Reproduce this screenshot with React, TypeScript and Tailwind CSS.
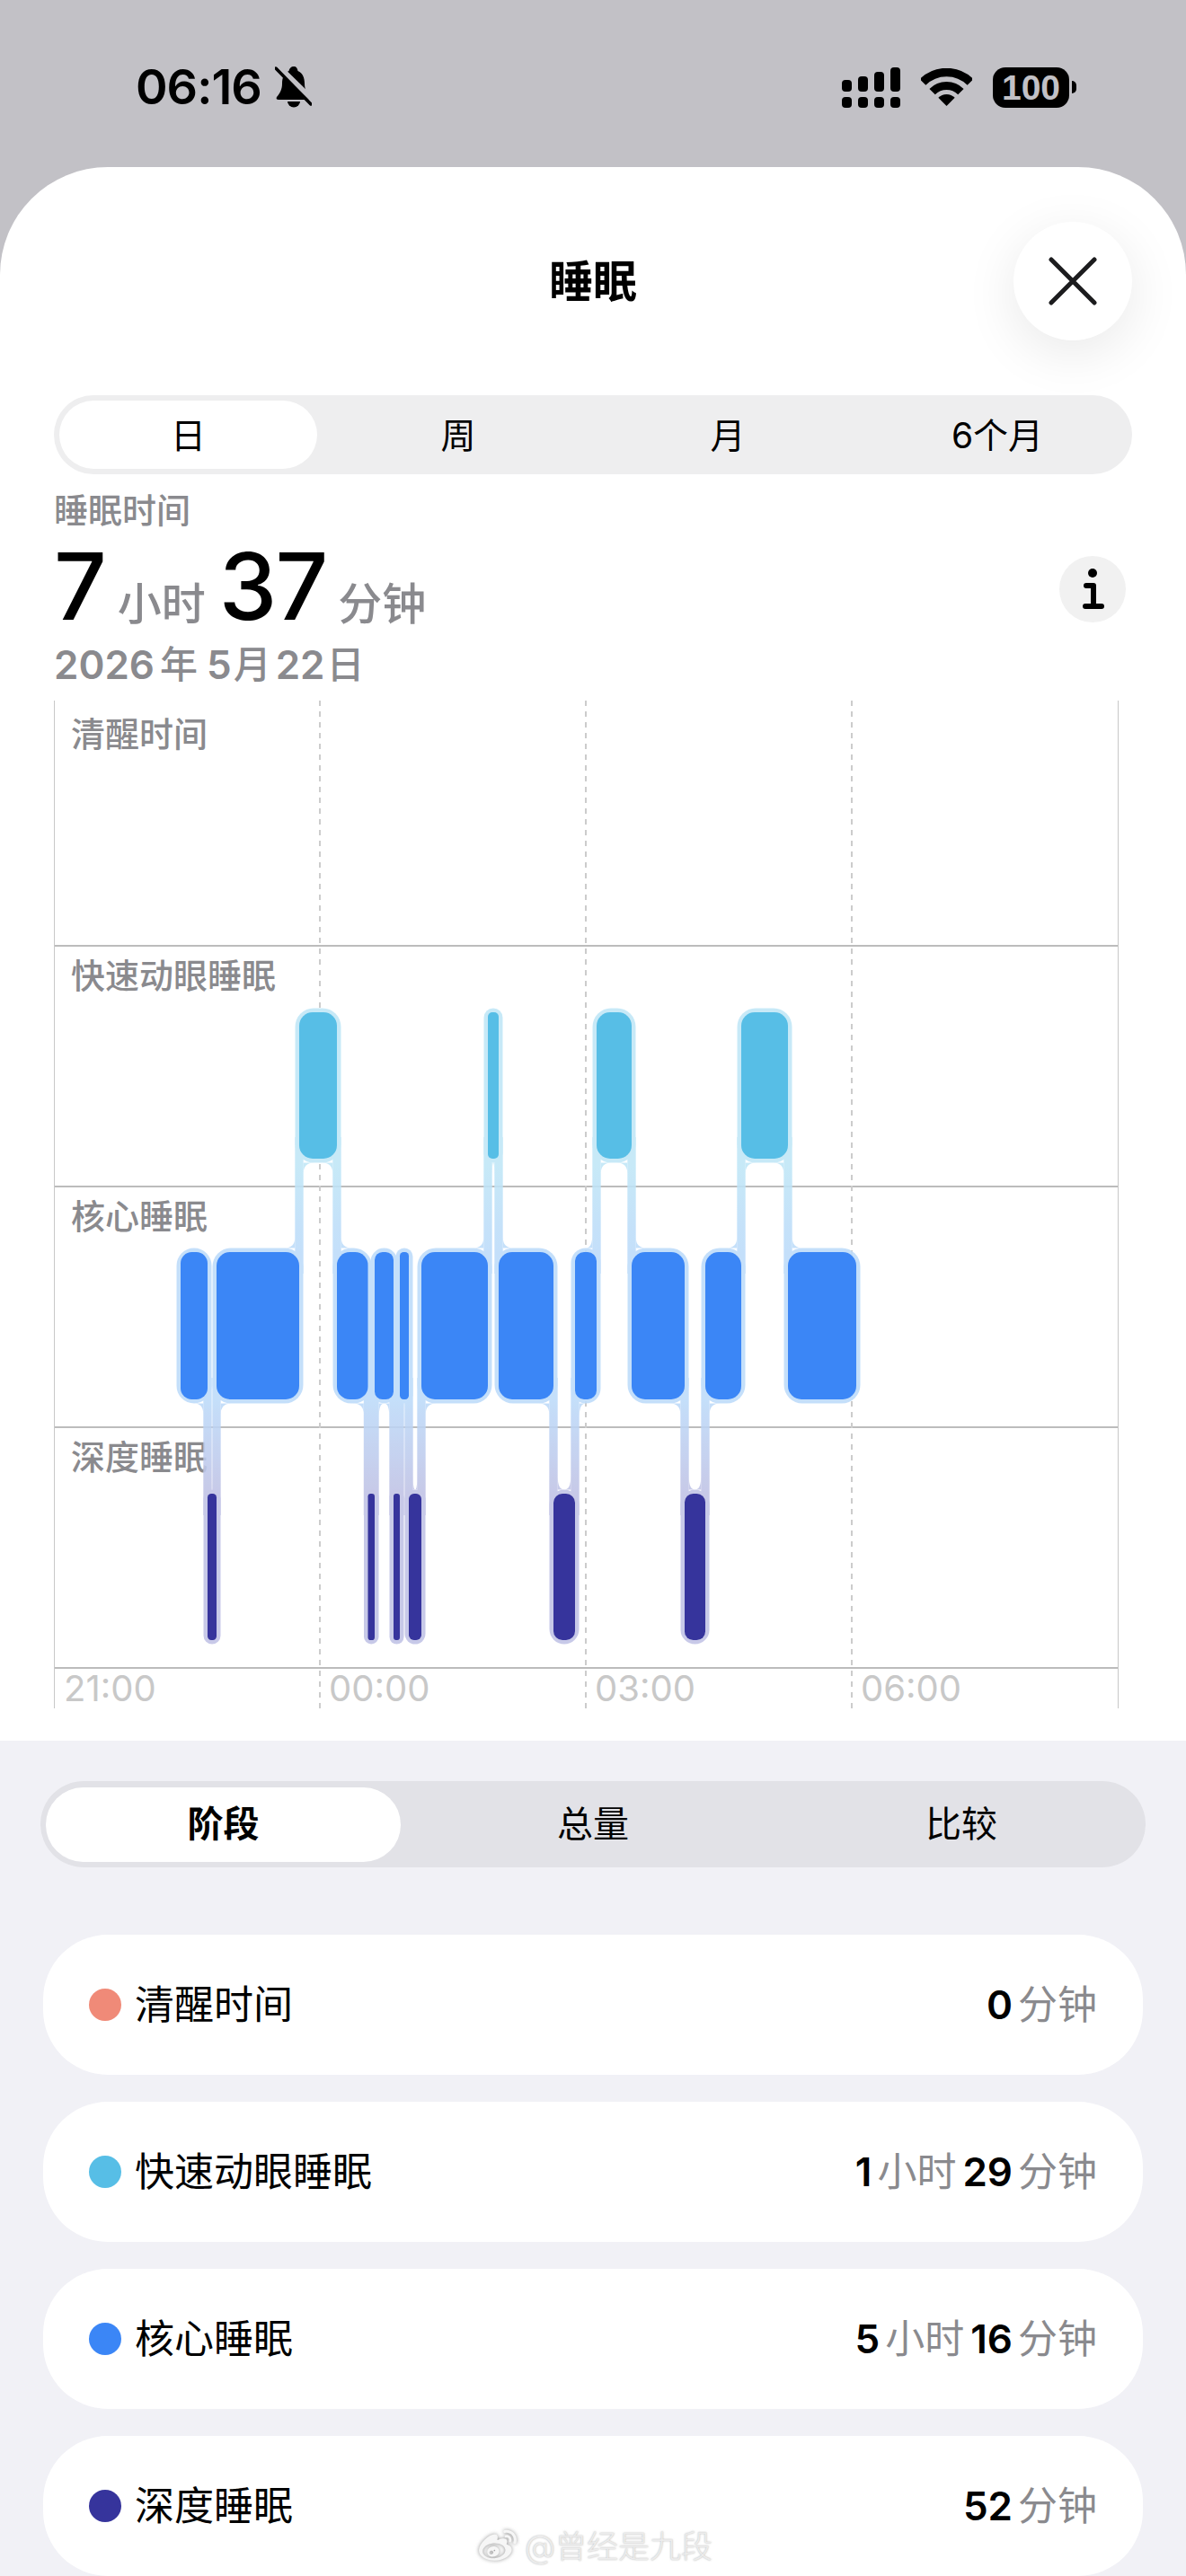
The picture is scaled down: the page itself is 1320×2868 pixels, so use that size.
import { FaWeibo } from 'react-icons/fa'

type Seg = { x0: number; x1: number; row: 0 | 1 | 2 }

const rowY = [
  { top: 1127, bottom: 1290 },
  { top: 1394, bottom: 1558 },
  { top: 1663, bottom: 1826 },
]
const fills = ['#57bee6', '#3b86f6', '#36349c']
const halos = ['#c0e7f7', '#bddbfa', '#c0c2e5']

const segs: Seg[] = [
  { x0: 201, x1: 231, row: 1 },
  { x0: 231, x1: 241, row: 2 },
  { x0: 241, x1: 333, row: 1 },
  { x0: 333, x1: 375, row: 0 },
  { x0: 375, x1: 409.5, row: 1 },
  { x0: 409.5, x1: 417, row: 2 },
  { x0: 417, x1: 438, row: 1 },
  { x0: 438, x1: 445, row: 2 },
  { x0: 445, x1: 455, row: 1 },
  { x0: 455, x1: 469, row: 2 },
  { x0: 469, x1: 543, row: 1 },
  { x0: 543, x1: 555, row: 0 },
  { x0: 555, x1: 616, row: 1 },
  { x0: 616, x1: 640, row: 2 },
  { x0: 640, x1: 664, row: 1 },
  { x0: 664, x1: 703, row: 0 },
  { x0: 703, x1: 762, row: 1 },
  { x0: 762, x1: 785, row: 2 },
  { x0: 785, x1: 825, row: 1 },
  { x0: 825, x1: 877, row: 0 },
  { x0: 877, x1: 953, row: 1 },
]

const strip = 4.7

function fillet(cx: number, cy: number, dir: number, v: number, width: number) {
  const arch = width - strip * 2
  if (arch <= 0) return ''
  const w = Math.min(12, arch / 2)
  const h = arch < 20 ? 15 : 12
  return `M${cx} ${cy} L${cx + dir * w} ${cy} Q${cx} ${cy} ${cx} ${cy + v * h} Z`
}

function SleepChart() {
  return (
    <svg className="absolute inset-0" width="1183" height="1122" viewBox="61 780 1183 1122">
      <defs>
        <linearGradient id="remCore" gradientUnits="userSpaceOnUse" x1="0" y1="1290" x2="0" y2="1394">
          <stop offset="0" stopColor={halos[0]} />
          <stop offset="1" stopColor={halos[1]} />
        </linearGradient>
        <linearGradient id="coreDeep" gradientUnits="userSpaceOnUse" x1="0" y1="1558" x2="0" y2="1663">
          <stop offset="0" stopColor={halos[1]} />
          <stop offset="1" stopColor={halos[2]} />
        </linearGradient>
      </defs>
      {[356, 652, 948].map((x) => (
        <line key={x} x1={x} x2={x} y1="780" y2="1902" stroke="#cccccc" strokeWidth="2" strokeDasharray="6 6" />
      ))}
      {/* halos and the connectors between stages */}
      <g opacity="0.88">
        {segs.slice(0, -1).map((a, i) => {
          const b = segs[i + 1]
          const upper = a.row < b.row ? a : b
          const lower = a.row < b.row ? b : a
          const x = a.x1
          const y0 = rowY[upper.row].bottom
          const y1 = rowY[lower.row].top
          const upDir = upper === a ? -1 : 1
          const lowDir = lower === a ? -1 : 1
          const d =
            fillet(x + upDir * strip, y0 + 4.5, upDir, 1, upper.x1 - upper.x0) +
            fillet(x + lowDir * strip, y1 - 4.5, lowDir, -1, lower.x1 - lower.x0)
          const grad = upper.row === 0 ? 'url(#remCore)' : 'url(#coreDeep)'
          // the strip runs on behind both bars so their rounded halo corners leave no notch
          return (
            <g key={x} fill={grad}>
              <rect x={x - strip} y={y0 - 24} width={strip * 2} height={y1 - y0 + 48} />
              <path d={d} />
            </g>
          )
        })}
        {segs.map((s) => {
          const w = s.x1 - s.x0
          return (
            <rect
              key={s.x0}
              x={s.x0 - 4.5}
              y={rowY[s.row].top - 4.5}
              width={w + 9}
              height={rowY[s.row].bottom - rowY[s.row].top + 9}
              rx={Math.min(w / 2, 16) + 4.5}
              fill={halos[s.row]}
            />
          )
        })}
      </g>
      {segs.map((s) => {
        const w = s.x1 - s.x0
        return (
          <rect
            key={s.x0}
            x={s.x0}
            y={rowY[s.row].top}
            width={w}
            height={rowY[s.row].bottom - rowY[s.row].top}
            rx={Math.min(w / 2.4, 15)}
            fill={fills[s.row]}
          />
        )
      })}
    </svg>
  )
}

function StatusBar() {
  return (
    <div className="h-[186px] pt-[72px] pl-[151px] pr-[122px]">
      <div className="flex h-[50px] items-center justify-between">
        <div className="flex items-center">
          <span className="text-[54px] leading-none font-semibold tracking-[-1px] text-black">06:16</span>
          {/* muted bell */}
          <svg className="ml-[15px]" width="41" height="46" viewBox="0 0 41 46">
            <path d="M21 0c-3 0-5 2-5.500 5C10 7 8 13 8 19c0 6-2 10-6 15-1 2 0 3 2 3h33c2 0 3-1 2-3-4-5-6-9-6-15 0-6-2-12-7.500-14C25 2 24 0 21 0Z" fill="#000" />
            <path d="M14 39h14a7 6.500 0 0 1-14 0Z" fill="#000" />
            <path d="M3 -1L44 39" stroke="#c2c1c6" strokeWidth="6" />
            <path d="M1 2L40 42" stroke="#000" strokeWidth="3.500" strokeLinecap="round" />
          </svg>
        </div>
        <div className="flex items-center">
          {/* signal */}
          <svg width="65" height="45" viewBox="0 0 65 45">
            <g fill="#000">
              <rect x="0" y="33" width="11" height="12" rx="4" />
              <rect x="18" y="33" width="11" height="12" rx="4" />
              <rect x="36" y="33" width="11" height="12" rx="4" />
              <rect x="54" y="33" width="11" height="12" rx="4" />
              <rect x="0" y="14" width="11" height="13" rx="4" />
              <rect x="18" y="10" width="11" height="17" rx="4" />
              <rect x="36" y="5" width="11" height="22" rx="4" />
              <rect x="54" y="0" width="11" height="27" rx="4" />
            </g>
          </svg>
          {/* wifi */}
          <svg className="ml-[23px]" width="57" height="42" viewBox="0 0 57 42">
            <g fill="none" stroke="#000">
              <path d="M2 15.500A37.500 37.500 0 0 1 55 15.500" strokeWidth="9.500" />
              <path d="M12.600 26.100A22.500 22.500 0 0 1 44.400 26.100" strokeWidth="9" />
            </g>
            <path d="M28.500 42L19.300 32.800A13 13 0 0 1 37.700 32.800Z" fill="#000" />
          </svg>
          {/* battery */}
          <div className="ml-[23px] flex h-[45px] w-[85px] items-center justify-center rounded-[14px] bg-black text-[39px] leading-none font-bold text-[#c2c1c6] font-['Liberation_Sans',sans-serif]">
            100
          </div>
          <div className="ml-[3px] h-[14px] w-[5px] rounded-r-full bg-black" />
        </div>
      </div>
    </div>
  )
}

function CloseButton() {
  return (
    <div className="flex h-[132px] w-[132px] items-center justify-center rounded-full bg-white shadow-[0_14px_60px_rgba(0,0,0,0.09)]">
      <svg width="54" height="54" viewBox="0 0 54 54">
        <path d="M3 3L51 51M51 3L3 51" stroke="#1c1c1e" strokeWidth="5" strokeLinecap="round" />
      </svg>
    </div>
  )
}

function Row({ color, label, value }: { color: string; label: string; value: [string, string][] }) {
  return (
    <div className="flex h-[156px] shrink-0 items-center rounded-[72px] bg-white pl-[51px] pr-[51px]">
      <div className={`h-[36px] w-[36px] rounded-full ${color}`} />
      <span className="ml-[15px] text-[44px] leading-none text-black">{label}</span>
      <div className="ml-auto flex items-center gap-[7px] text-[44px] leading-none">
        {value.map(([n, u]) => (
          <span key={u} className="flex items-center gap-[6px]">
            <span className="font-semibold text-black">{n}</span>
            <span className="text-[#8a8a8e]">{u}</span>
          </span>
        ))}
      </div>
    </div>
  )
}

export default function App() {
  return (
    <div className="relative h-[2868px] w-[1320px] overflow-hidden bg-[#c2c1c6] font-['Inter','Noto_Sans_CJK_SC',sans-serif]">
      <StatusBar />

      <div className="h-[2682px] overflow-hidden rounded-t-[120px] bg-white">
        {/* Header */}
        <div className="grid h-[254px] grid-cols-[132px_1fr_132px] items-center px-[60px]">
          <div />
          <h1 className="text-center text-[49px] leading-none font-bold text-black">睡眠</h1>
          <CloseButton />
        </div>

        {/* Range tabs */}
        <div className="mx-[60px] grid h-[88px] grid-cols-4 items-center rounded-[44px] bg-[#eeeeef] text-[39px] leading-none text-black">
          <div className="ml-[6px] mr-[7px] flex h-[76px] items-center justify-center rounded-[38px] bg-white">日</div>
          <div className="text-center">周</div>
          <div className="text-center">月</div>
          <div className="text-center">6个月</div>
        </div>

        {/* Summary */}
        <div className="mx-[60px] h-[252px] pt-[20px]">
          <p className="h-[40px] text-[38px] leading-[40px] font-medium text-[#8a8a8e]">睡眠时间</p>
          <div className="mt-[6px] flex h-[116px] items-center justify-between pr-[7px]">
            <div className="flex items-baseline">
              <span className="text-[103px] leading-none font-medium tracking-[-2px] text-black">7</span>
              <span className="ml-[14px] text-[49px] leading-none font-medium text-[#8a8a8e]">小时</span>
              <span className="ml-[15px] text-[103px] leading-none font-medium tracking-[-2px] text-black">37</span>
              <span className="ml-[13px] text-[49px] leading-none font-medium text-[#8a8a8e]">分钟</span>
            </div>
            <div className="mt-[8px] flex h-[74px] w-[74px] items-center justify-center rounded-full bg-[#f1f1f1]">
              <svg width="74" height="74" viewBox="0 0 74 74">
                <circle cx="37" cy="19" r="5" fill="#000" />
                <path d="M30 33H38V56M29 56H47" fill="none" stroke="#000" strokeWidth="6" strokeLinecap="round" strokeLinejoin="round" />
              </svg>
            </div>
          </div>
          <p className="flex h-[60px] items-center text-[44px] leading-none font-semibold text-[#8a8a8e]">
            <span>2026</span>
            <span className="ml-[6px] text-[42px] font-medium">年</span>
            <span className="ml-[10px]">5</span>
            <span className="ml-[2px] text-[42px] font-medium">月</span>
            <span className="ml-[5px]">22</span>
            <span className="ml-[2px] text-[42px] font-medium">日</span>
          </p>
        </div>

        {/* Chart */}
        <div className="relative ml-[60px] h-[1122px] w-[1185px] border-x border-[#c8c8c8] text-[38px] leading-none font-medium text-[#8a8a8e]">
          <div className="h-[272px] pl-[18px] pt-[18px]">清醒时间</div>
          <div className="h-[268px] border-t-2 border-[#bcbcbc] pl-[18px] pt-[13px]">快速动眼睡眠</div>
          <div className="h-[268px] border-t-2 border-[#bcbcbc] pl-[18px] pt-[13px]">核心睡眠</div>
          <div className="h-[268px] border-t-2 border-[#bcbcbc] pl-[18px] pt-[13px]">深度睡眠</div>
          <div className="grid h-[46px] grid-cols-[295px_296px_296px_296px] border-t-2 border-[#bcbcbc] pt-[2px] text-[40px] font-normal text-[#c8c8c8]">
            <span className="pl-[10px]">21:00</span>
            <span className="pl-[10px]">00:00</span>
            <span className="pl-[10px]">03:00</span>
            <span className="pl-[10px]">06:00</span>
          </div>
          <SleepChart />
        </div>

        {/* Lower section */}
        <div className="mt-[36px] h-[930px] bg-[#f1f1f6] pt-[45px]">
          <div className="mx-[45px] grid h-[96px] grid-cols-3 items-center rounded-[48px] bg-[#e2e2e7] text-[40px] leading-none text-black">
            <div className="ml-[6px] mr-[9px] flex h-[83px] items-center justify-center rounded-[42px] bg-white font-bold">阶段</div>
            <div className="text-center">总量</div>
            <div className="text-center">比较</div>
          </div>
          <div className="mx-[48px] mt-[75px] flex flex-col gap-[30px]">
            <Row color="bg-[#f08a78]" label="清醒时间" value={[['0', '分钟']]} />
            <Row color="bg-[#57bee6]" label="快速动眼睡眠" value={[['1', '小时'], ['29', '分钟']]} />
            <Row color="bg-[#3b86f6]" label="核心睡眠" value={[['5', '小时'], ['16', '分钟']]} />
            <Row color="bg-[#36349c]" label="深度睡眠" value={[['52', '分钟']]} />
          </div>
        </div>
      </div>

      {/* Watermark */}
      <div className="absolute left-[530px] top-[2814px] flex items-center gap-[6px] text-[35px] leading-none font-light text-[#ececec] [text-shadow:0_0_2px_rgba(120,120,120,0.6)]">
        <FaWeibo className="h-[42px] w-[48px] text-[#f6f6f6] drop-shadow-[0_0_2px_rgba(100,100,100,0.7)]" />
        <span>@曾经是九段</span>
      </div>
    </div>
  )
}
